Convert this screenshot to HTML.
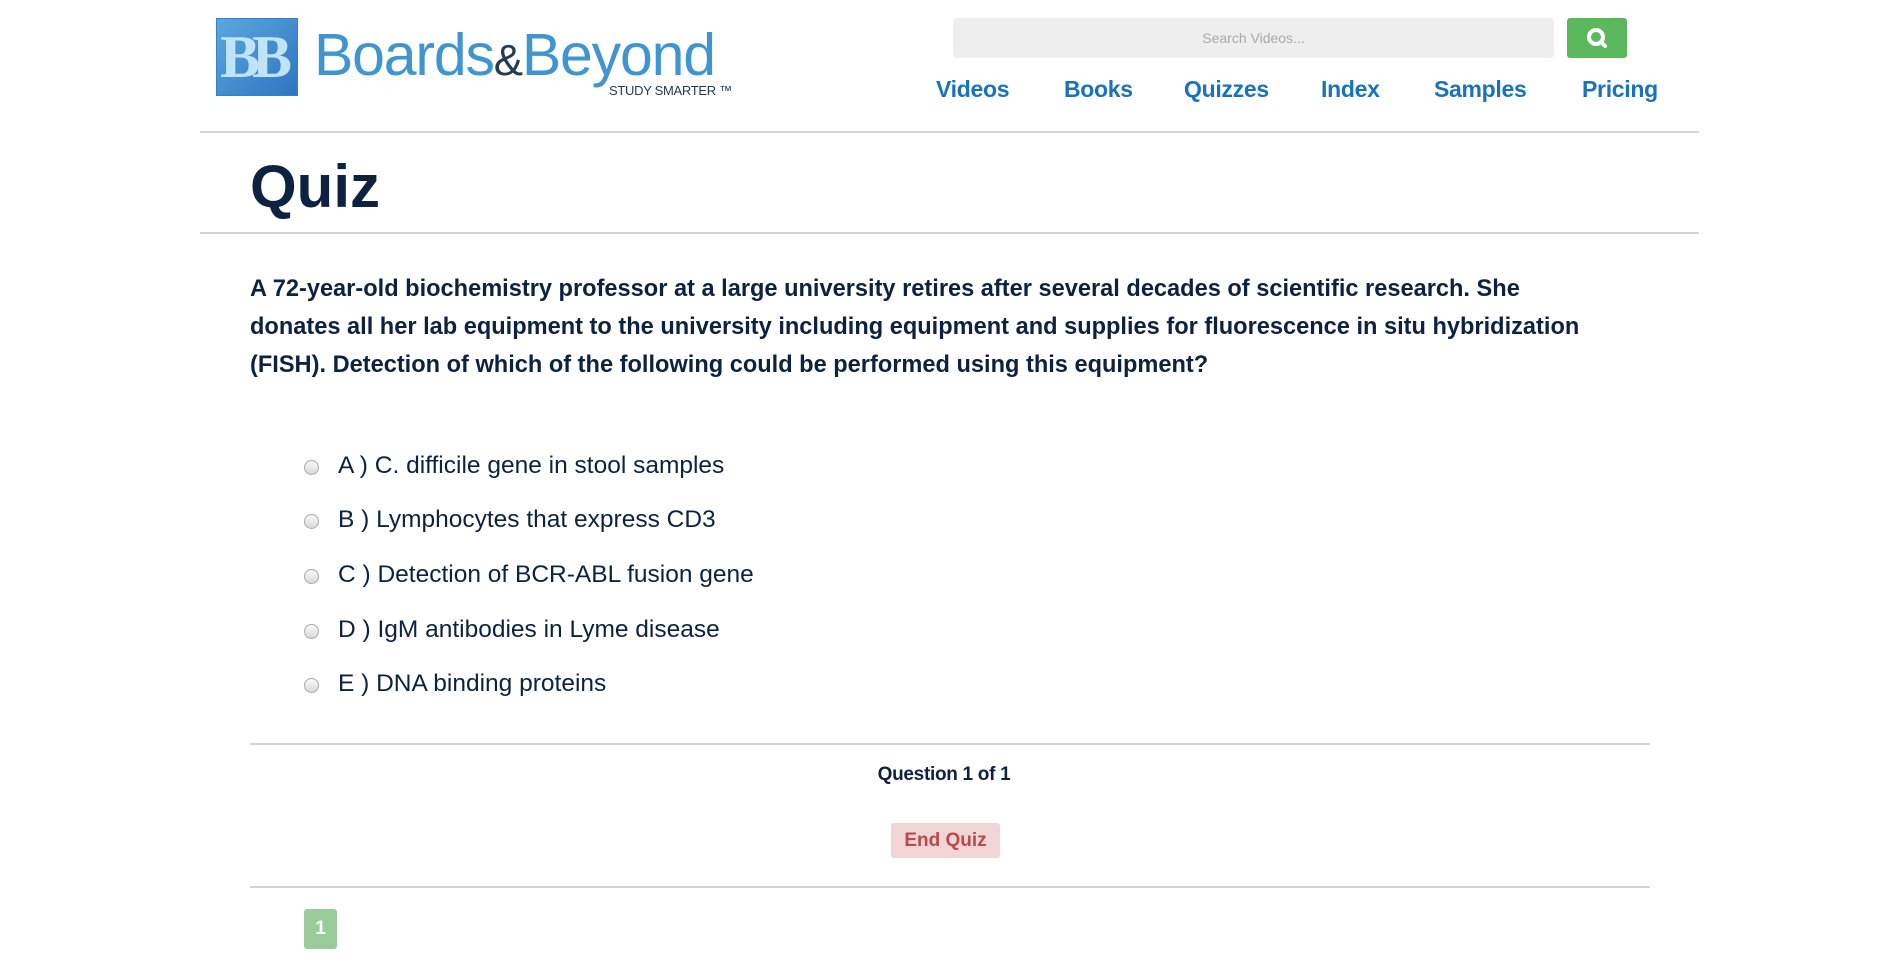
<!DOCTYPE html>
<html><head><meta charset="utf-8"><style>
*{margin:0;padding:0;box-sizing:border-box}
body{width:1899px;height:971px;background:#fff;font-family:"Liberation Sans",sans-serif;position:relative;overflow:hidden;color:#0d2240}
.a{position:absolute}
.hr{position:absolute;height:2px;background:#d4d4d4}
.nav{position:absolute;top:76px;font-size:23px;font-weight:bold;color:#1a72b8;letter-spacing:-0.3px}
.q{position:absolute;left:250px;font-size:23.6px;font-weight:bold;color:#0d2240;white-space:nowrap}
.opt{position:absolute;left:338px;font-size:24.5px;color:#0d2240;white-space:nowrap}
.rad{position:absolute;left:304px;width:15px;height:15px;border-radius:50%;border:1px solid #aaa;background:linear-gradient(#fafafa,#d8d8d8)}
</style></head><body>
<div class="a" style="left:216px;top:18px;width:82px;height:78px;background:linear-gradient(135deg,#5aa8df,#2e75c0);border:1px solid #3a80c8"></div>
<div class="a" style="left:220px;top:22px;font-size:60px;font-weight:bold;color:#bfe3f7;letter-spacing:-8px;font-family:'Liberation Serif',serif;line-height:70px">BB</div>
<div class="a" style="left:314px;top:22px;font-size:59px;color:#3f95cf;letter-spacing:-1.2px;line-height:66px">Boards<span style="color:#243b53;font-size:44px">&amp;</span>Beyond</div>
<div class="a" style="left:609px;top:83px;font-size:13px;color:#243b53;letter-spacing:-0.3px">STUDY SMARTER ™</div>
<div class="a" style="left:953px;top:18px;width:601px;height:40px;background:#eee;border-radius:4px;text-align:center;line-height:40px;font-size:14px;color:#aaa">Search Videos...</div>
<div class="a" style="left:1567px;top:18px;width:60px;height:40px;background:#5cb85c;border-radius:3px">
<svg width="60" height="40" viewBox="0 0 60 40"><circle cx="29" cy="19" r="7" fill="none" stroke="#fff" stroke-width="4"/><line x1="34" y1="24" x2="38" y2="28" stroke="#fff" stroke-width="4" stroke-linecap="round"/></svg></div>
<div class="nav" style="left:936px">Videos</div>
<div class="nav" style="left:1064px">Books</div>
<div class="nav" style="left:1184px">Quizzes</div>
<div class="nav" style="left:1321px">Index</div>
<div class="nav" style="left:1434px">Samples</div>
<div class="nav" style="left:1582px">Pricing</div>
<div class="hr" style="left:200px;width:1499px;top:131px"></div>
<div class="a" style="left:250px;top:152px;font-size:60px;font-weight:bold;color:#0d2240;line-height:70px">Quiz</div>
<div class="hr" style="left:200px;width:1499px;top:232px"></div>
<div class="q" style="top:276px">A 72-year-old biochemistry professor at a large university retires after several decades of scientific research. She</div>
<div class="q" style="top:314px">donates all her lab equipment to the university including equipment and supplies for fluorescence in situ hybridization</div>
<div class="q" style="top:352px">(FISH). Detection of which of the following could be performed using this equipment?</div>
<div class="rad" style="top:460px"></div><div class="opt" style="top:452px">A ) C. difficile gene in stool samples</div>
<div class="rad" style="top:514px"></div><div class="opt" style="top:506px">B ) Lymphocytes that express CD3</div>
<div class="rad" style="top:569px"></div><div class="opt" style="top:561px">C ) Detection of BCR-ABL fusion gene</div>
<div class="rad" style="top:624px"></div><div class="opt" style="top:616px">D ) IgM antibodies in Lyme disease</div>
<div class="rad" style="top:678px"></div><div class="opt" style="top:670px">E ) DNA binding proteins</div>
<div class="hr" style="left:250px;width:1400px;top:743px"></div>
<div class="a" style="left:0;width:1888px;top:764px;text-align:center;font-size:19px;font-weight:bold;color:#0d2240;letter-spacing:-0.3px">Question 1 of 1</div>
<div class="a" style="left:891px;top:823px;width:109px;height:35px;background:#f0d4d6;border-radius:3px;text-align:center;line-height:35px;font-size:19px;font-weight:bold;color:#b94a48">End Quiz</div>
<div class="hr" style="left:250px;width:1400px;top:886px"></div>
<div class="a" style="left:304px;top:909px;width:33px;height:40px;background:#99cc99;border-radius:3px;text-align:center;line-height:40px;font-size:19px;font-weight:bold;color:#fff">1</div>
</body></html>
